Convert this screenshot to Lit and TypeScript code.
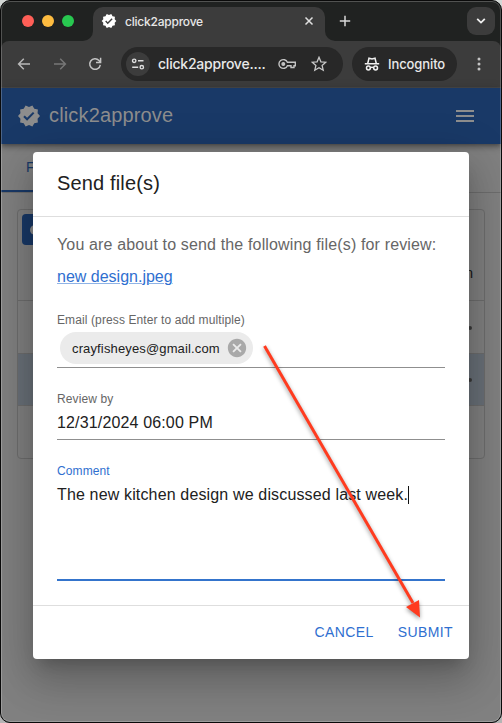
import { LitElement, html, css, svg } from "lit";
import { customElement } from "lit/decorators.js";

const badge = svg`<path fill-rule="evenodd" d="M23 12l-2.44-2.79.34-3.69-3.61-.82-1.89-3.2L12 2.96 8.6 1.5 6.71 4.69 3.1 5.5l.34 3.7L1 12l2.44 2.79-.34 3.7 3.61.82L8.6 22.5l3.4-1.47 3.4 1.46 1.89-3.19 3.61-.82-.34-3.69L23 12zm-12.91 4.72l-3.8-3.81 1.48-1.48 2.32 2.33 5.85-5.87 1.48 1.48-7.33 7.35z"/>`;

@customElement("browser-chrome")
export class BrowserChrome extends LitElement {
  static styles = css`
    :host { display: block; flex: none; font-family: Inter, "Liberation Sans", sans-serif; color: #e8e8e8; background: #202221; }
    svg { display: block; flex: none; }
    .strip { display: flex; height: 40px; background: #202221; }
    .under { background: linear-gradient(90deg, #202221 50%, #3c3c3c 50%); flex: none; }
    .lights { display: flex; align-items: center; gap: 8px; width: 92px; height: 40px; padding-left: 21px; box-sizing: border-box; border-bottom-right-radius: 10px; background: #202221; }
    .light { width: 12px; height: 12px; border-radius: 50%; }
    .red { background: #ff5f57; } .amber { background: #febc40; } .green { background: #28c850; }
    .tabcell { background: linear-gradient(#202221 50%, #3c3c3c 50%); flex: none; }
    .tab { display: flex; align-items: center; width: 232px; height: 34px; margin-top: 6px; padding: 0 0 6px 8px; box-sizing: border-box; background: #3c3c3c; border-radius: 10px 10px 0 0; }
    .title { font-size: 12px; font-weight: 500; margin-left: 8px; flex: 1; letter-spacing: -.22px; }
    .close { margin-right: 11px; }
    .rest { flex: 1; background: linear-gradient(90deg, #3c3c3c 50%, #202221 50%); }
    .inner { display: flex; align-items: center; height: 40px; box-sizing: border-box; background: #202221; border-bottom-left-radius: 10px; padding: 0 6px 0 14px; justify-content: space-between; }
    .down { width: 28px; height: 28px; border-radius: 9px; background: #3c3c3c; display: grid; place-items: center; }
    .bar { display: flex; align-items: center; height: 47px; background: #3c3c3c; padding: 0 0 1px 14px; box-sizing: border-box; border-radius: 8px 8px 0 0; border-bottom: 1px solid #474747; }
    .gap { margin-left: 18px; }
    .near { margin-left: 17px; }
    .omni { display: flex; align-items: center; width: 222px; height: 34px; margin-left: 17px; border-radius: 17px; background: #282828; box-sizing: border-box; padding-left: 5px; }
    .site { width: 24px; height: 24px; border-radius: 50%; background: #3c3c3c; display: grid; place-items: center; }
    .url { font-size: 14px; font-weight: 500; margin-left: 8px; width: 120px; white-space: nowrap; letter-spacing: -.22px; }
    .star { margin-left: 15px; }
    .incog { display: flex; align-items: center; width: 105px; height: 34px; margin-left: 9px; border-radius: 17px; background: #282828; box-sizing: border-box; padding-left: 12px; font-size: 13px; font-weight: 500; gap: 8px; letter-spacing: -.1px; }
    .dots { margin-left: 19px; }
  `;
  render() {
    return html`
      <div class="strip">
        <div class="under"><div class="lights"><i class="light red"></i><i class="light amber"></i><i class="light green"></i></div></div>
        <div class="tabcell"><div class="tab">
          <svg width="16" height="16" viewBox="0 0 24 24" fill="#fff">${badge}</svg>
          <span class="title">click2approve</span>
          <svg class="close" width="10" height="10" viewBox="0 0 10 10" stroke="#e0e0e0" stroke-width="1.5"><path d="M1.5 1.5l7 7M8.5 1.5l-7 7"/></svg>
        </div></div>
        <div class="rest"><div class="inner">
          <svg width="12" height="12" viewBox="0 0 12 12" stroke="#d8d8d8" stroke-width="1.5"><path d="M6 .8v10.4M.8 6h10.4"/></svg>
          <div class="down"><svg width="10" height="8" viewBox="0 0 10 8" fill="none" stroke="#eee" stroke-width="1.8"><path d="M1.2 1.8L5 5.6l3.8-3.8"/></svg></div>
        </div></div>
      </div>
      <div class="bar">
        <svg width="18" height="18" viewBox="0 0 18 18" fill="none" stroke="#b8b8b8" stroke-width="1.5"><path d="M15 9H3.5M8.8 3.8L3.6 9l5.2 5.2"/></svg>
        <svg class="gap" width="18" height="18" viewBox="0 0 18 18" fill="none" stroke="#777" stroke-width="1.5"><path d="M3 9h11.5M9.2 3.8L14.4 9l-5.2 5.2"/></svg>
        <svg class="near" width="18" height="18" viewBox="0 0 18 18" fill="none" stroke="#c4c4c4" stroke-width="1.5"><path d="M14.3 9.8A5.3 5.3 0 1 1 13 5.5L14.5 7M14.6 2.8v4.6H10"/></svg>
        <div class="omni">
          <div class="site"><svg width="14" height="14" viewBox="0 0 14 14" fill="none" stroke="#ddd" stroke-width="1.4"><circle cx="3.2" cy="3.8" r="1.7"/><path d="M7 3.8h5.5M1.2 10.2h6"/><circle cx="10.8" cy="10.2" r="1.7"/></svg></div>
          <span class="url">click2approve....</span>
          <svg width="18" height="12" viewBox="0 0 18 12" fill="none" stroke="#c4c4c4" stroke-width="1.4"><path d="M9.4 4.3H17.3V7.7H16V9.5H13V7.7H9.4A4.4 4.4 0 1 1 9.4 4.3z"/><circle cx="5.3" cy="6" r="1.3" fill="#c4c4c4"/></svg>
          <svg class="star" width="16" height="16" viewBox="0 0 16 16" fill="none" stroke="#c8c8c8" stroke-width="1.3"><path d="M8 1.3l1.9 4.5 4.9.4-3.7 3.2 1.1 4.8L8 11.7l-4.2 2.5 1.1-4.8L1.2 6.2l4.9-.4z"/></svg>
        </div>
        <div class="incog">
          <svg width="16" height="16" viewBox="0 0 16 16" fill="none" stroke="#f0f0f0" stroke-width="1.5"><path d="M.8 7.7h14.4M3.7 7.5L5 2.2l3 .7 3-.7 1.3 5.3M6.3 11.6q1.7-.9 3.4 0"/><circle cx="4.4" cy="12" r="1.9"/><circle cx="11.6" cy="12" r="1.9"/></svg>
          <span>Incognito</span>
        </div>
        <svg class="dots" width="6" height="16" viewBox="0 0 6 16" fill="#c4c4c4"><circle cx="3" cy="3" r="1.5"/><circle cx="3" cy="8" r="1.5"/><circle cx="3" cy="13" r="1.5"/></svg>
      </div>`;
  }
}

@customElement("files-page")
export class FilesPage extends LitElement {
  static styles = css`
    :host { display: flex; flex-direction: column; flex: 1; background: #808080; }
    .appbar { flex: none; height: 56px; background: #193967; display: flex; align-items: center; padding: 0 27px 0 16px; color: #8d8d8d; font-size: 20px; position: relative; box-shadow: 0 2px 4px -1px rgba(0,0,0,.3), 0 4px 5px rgba(0,0,0,.16), 0 1px 10px rgba(0,0,0,.14); }
    .name { margin-left: 8px; padding-bottom: 2px; letter-spacing: .15px; flex: 1; }
    .tabs { height: 49px; box-sizing: border-box; border-bottom: 1px solid #6d6d6d; display: flex; }
    .tab { width: 90px; height: 48px; box-sizing: border-box; border-bottom: 2px solid #193967; padding: 15px 0 0 25px; color: #193967; font-size: 14px; letter-spacing: .4px; }
    .card { margin: 16px 16px 0 16px; height: 250px; box-sizing: border-box; border: 1px solid #6d6d6d; border-radius: 4px; display: flex; flex-direction: column; }
    .tools { height: 39px; padding: 4px; box-sizing: border-box; }
    .button { width: 64px; height: 31px; border-radius: 4px; background: #193967; display: flex; align-items: center; padding-left: 8px; box-sizing: border-box; }
    .knob { width: 16px; height: 10px; border-radius: 5px; background: #8d8d8d; }
    .row { box-sizing: border-box; border-bottom: 1px solid #6d6d6d; display: flex; align-items: center; justify-content: flex-end; }
    .head { height: 52px; padding: 0 11px 3px 0; font-size: 14px; color: #151515; }
    .one { height: 53px; padding: 2px 12px 0 0; }
    .picked { background: #697078; height: 52px; padding: 1px 12px 0 0; }
    .dot { width: 4px; height: 4px; border-radius: 50%; background: #3b3b3b; }
  `;
  render() {
    return html`
      <div class="appbar">
        <svg width="24" height="24" viewBox="0 0 24 24" fill="#8d8d8d">${badge}</svg>
        <span class="name">click2approve</span>
        <svg width="18" height="12" viewBox="0 0 18 12" fill="#8d8d8d"><path d="M0 0h18v2H0zM0 5h18v2H0zM0 10h18v2H0z"/></svg>
      </div>
      <div class="tabs"><div class="tab">FILES</div></div>
      <div class="card">
        <div class="tools"><div class="button"><i class="knob"></i></div></div>
        <div class="row head">Action</div>
        <div class="row one"><i class="dot"></i></div>
        <div class="row picked"><i class="dot"></i></div>
      </div>`;
  }
}

@customElement("send-dialog")
export class SendDialog extends LitElement {
  static styles = css`
    :host { display: flex; flex-direction: column; width: 436px; height: 507px; background: #fff; border-radius: 4px; color: #212121; box-shadow: 0 11px 15px -7px rgba(0,0,0,.2), 0 24px 38px 3px rgba(0,0,0,.14), 0 9px 46px 8px rgba(0,0,0,.12); }
    .title { height: 64px; box-sizing: border-box; padding: 15px 24px; font-size: 20px; line-height: 32px; letter-spacing: .15px; }
    .body { height: 390px; box-sizing: border-box; border-top: 1px solid #dedede; border-bottom: 1px solid #dedede; padding: 16px 24px 0; font-size: 16px; }
    .intro { line-height: 24px; color: #666; letter-spacing: .15px; white-space: nowrap; }
    .link { display: block; width: max-content; line-height: 18px; margin-top: 11px; color: #2f6fd0; text-decoration: underline 1px #8fb3e6; text-underline-offset: 1px; height: 18px; }
    .label { font-size: 12px; line-height: 16px; color: #666; letter-spacing: .11px; }
    .email { margin-top: 26px; height: 56px; box-sizing: border-box; border-bottom: 1px solid #8f8f8f; }
    .chip { margin: 4px 0 0 3px; display: flex; align-items: center; justify-content: space-between; width: 193px; height: 32px; border-radius: 16px; background: #ebebeb; padding: 0 5px 0 12px; box-sizing: border-box; font-size: 13px; letter-spacing: .14px; }
    .date { margin-top: 23px; height: 49px; box-sizing: border-box; border-bottom: 1px solid #8f8f8f; }
    .value { line-height: 23px; margin-top: 4px; letter-spacing: .15px; display: flex; align-items: center; white-space: nowrap; }
    .comment { margin-top: 23px; height: 118px; box-sizing: border-box; border-bottom: 2px solid #3474cc; }
    .comment .label { color: #2f6fd0; }
    .caret { width: 1px; height: 18px; background: #111; }
    .actions { flex: 1; display: flex; justify-content: flex-end; align-items: center; gap: 24px; padding: 0 16px 2px 0; font-size: 14px; letter-spacing: .4px; color: #2f6fd0; }
  `;
  render() {
    return html`
      <div class="title">Send file(s)</div>
      <div class="body">
        <div class="intro">You are about to send the following file(s) for review:</div>
        <div class="link">new design.jpeg</div>
        <div class="email">
          <div class="label">Email (press Enter to add multiple)</div>
          <div class="chip"><span>crayfisheyes@gmail.com</span>
            <svg width="22" height="22" viewBox="0 0 24 24" fill="#a9a9a9"><path d="M12 2C6.47 2 2 6.47 2 12s4.47 10 10 10 10-4.47 10-10S17.53 2 12 2zm5 13.59L15.59 17 12 13.41 8.41 17 7 15.59 10.59 12 7 8.41 8.41 7 12 10.59 15.59 7 17 8.41 13.41 12 17 15.59z"/></svg>
          </div>
        </div>
        <div class="date"><div class="label">Review by</div><div class="value">12/31/2024 06:00 PM</div></div>
        <div class="comment"><div class="label">Comment</div><div class="value"><span>The new kitchen design we discussed last week.</span><i class="caret"></i></div></div>
      </div>
      <div class="actions"><span>CANCEL</span><span>SUBMIT</span></div>`;
  }
}

@customElement("app-root")
export class AppRoot extends LitElement {
  static styles = css`
    :host { display: block; position: relative; width: 502px; height: 723px; overflow: hidden; background: linear-gradient(#d4d8d6, #b4b4b4); font-family: "Liberation Sans", Arial, sans-serif; }
    .window { display: flex; flex-direction: column; width: 502px; height: 723px; box-sizing: border-box; border: 1px solid #0a0a0a; border-radius: 10px; overflow: hidden; position: relative; background: #202221; }
    .edge { position: absolute; inset: 0; border: 1px solid rgba(255,255,255,.22); border-radius: 9px; pointer-events: none; }
    .dialog { position: absolute; left: 32px; top: 151px; }
    .arrow { position: absolute; left: 0; top: 0; filter: drop-shadow(0 2px 2px rgba(0,0,0,.4)); }
  `;
  render() {
    return html`
      <div class="window">
        <browser-chrome></browser-chrome>
        <files-page></files-page>
        <send-dialog class="dialog"></send-dialog>
        <div class="edge"></div>
      </div>
      <svg class="arrow" width="502" height="723" viewBox="0 0 502 723">
        <path d="M264.5 346L413 603" stroke="#ff3b1f" stroke-width="3"/>
        <path d="M420 617.5L406 607L419 600z" fill="#ff3b1f"/>
      </svg>`;
  }
}
